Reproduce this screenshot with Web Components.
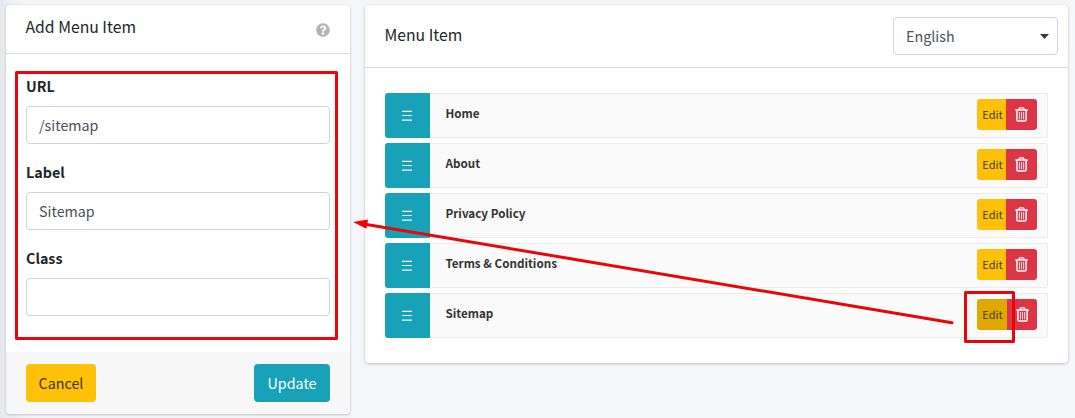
<!DOCTYPE html>
<html lang="en">
<head>
<meta charset="utf-8">
<title>Menu</title>
<style>
html,body{margin:0;height:418px;overflow:hidden}
body{background:#f4f6f9;font-family:"Noto Sans CJK SC","Noto Sans",sans-serif;font-size:14.3px;line-height:24px;color:#212529}
</style>
</head>
<body>
<menu-page></menu-page>
<script>
function define(name, html) {
  const t = document.createElement('template');
  t.innerHTML = html;
  customElements.define(name, class extends HTMLElement {
    constructor() {
      super();
      this.attachShadow({mode: 'open'}).append(t.content.cloneNode(true));
    }
  });
}

define('ui-card', `<style>
:host{display:block;box-sizing:border-box;background:#fff;border-radius:4px;box-shadow:0 0 1px rgba(0,0,0,.13),0 1px 3px rgba(0,0,0,.2);overflow:hidden}
</style><slot></slot>`);

define('card-header', `<style>
:host{display:flex;box-sizing:border-box;justify-content:space-between;border-bottom:1px solid #d9dcdf;font-size:15.75px}
</style><slot></slot>`);

define('help-icon', `<style>:host{display:block;width:14px;height:14px}svg{display:block}</style>
<svg width="14" height="14" viewBox="0 0 512 512"><path fill="#adb5bd" d="M504 256c0 137-111 248-248 248S8 393 8 256 119 8 256 8s248 111 248 248zM262.700 90c-54.500 0-89.300 23-116.500 63.800-3.500 5.300-2.400 12.400 2.700 16.300l34.700 26.300c5.200 3.900 12.600 3 16.700-2.100 17.900-22.700 30.100-35.800 57.300-35.800 20.400 0 45.700 13.100 45.700 33 0 15-12.400 22.700-32.500 34C247.100 238.500 216 254.900 216 296v4c0 6.600 5.400 12 12 12h56c6.600 0 12-5.400 12-12v-1.300c0-28.500 83.200-29.600 83.200-106.700 0-58-60.200-102-116.500-102zM256 338c-25.400 0-46 20.600-46 46s20.600 46 46 46 46-20.600 46-46-20.600-46-46-46z"/></svg>`);

define('form-field', `<style>
:host{display:block;margin-bottom:16px}
.label{display:block;font-weight:700;margin-bottom:8px}
.input{box-sizing:border-box;height:38px;border:1px solid #ced4da;border-radius:4px;padding:6px 12px;line-height:24px;color:#495057;background:#fff}
</style><span class="label"><slot name="label"></slot></span><div class="input"><slot></slot></div>`);

define('ui-button', `<style>
:host{display:block;box-sizing:border-box;height:38px;padding:7px 0;text-align:center;border-radius:4px;width:70px;background:#ffc107;color:#3b3522}
:host([kind=info]){width:76px;background:#17a2b8;color:#fff}
</style><slot></slot>`);

define('language-select', `<style>
:host{display:flex;box-sizing:border-box;width:165px;height:38px;border:1px solid #ced4da;border-radius:4px;padding:0 8px 0 12px;align-items:center;justify-content:space-between;color:#495057;font-size:14.3px}
svg{display:block}
</style><slot></slot><svg width="9" height="5" viewBox="0 0 9 5"><path d="M0 0h9L4.500 5z" fill="#343a40"/></svg>`);

define('menu-row', `<style>
:host{display:flex;box-sizing:border-box;height:45px;align-items:stretch;background:#fafafa;border-radius:3px;box-shadow:inset 0 0 0 1px #ebebeb;color:#333}
.handle{box-sizing:border-box;width:45px;padding-right:1px;background:#17a2b8;border-radius:3px 0 0 3px;display:flex;align-items:center;justify-content:center}
.name{flex:1;padding:8px 0 0 15.5px;font-size:11.650px;font-weight:700;line-height:24px}
.actions{display:flex;margin:6px 11px 8px 0;height:31px;border-radius:3px;overflow:hidden}
.edit{box-sizing:border-box;padding-left:2px;width:29px;background:#ffc107;color:#443b1d;font-size:11px;line-height:30px;text-align:center}
:host([active]) .edit{background:#e0a800;width:30px;padding-left:1px}
.remove{width:31px;background:#dc3545;display:flex;align-items:center;justify-content:center}
:host([active]) .remove{width:30px}
svg{display:block}
</style>
<div class="handle"><svg width="10" height="11" viewBox="0 0 10 11"><path d="M0 1.300h10M0 5.500h10M0 10.200h10" stroke="#f0fafb" stroke-width="1.200"/></svg></div>
<div class="name"><slot></slot></div>
<div class="actions"><div class="edit">Edit</div><div class="remove"><svg width="13" height="15" viewBox="0 0 13 15" fill="none" stroke="#fff"><path d="M.2 3h12.600" stroke-width="1.500"/><path d="M4 2.800V1.800Q4 .9 5 .9h3q1 0 1 .9v1" stroke-width="1.300"/><path d="M1.900 3v9.700q0 1.400 1.400 1.400h6.400q1.400 0 1.400-1.400V3" stroke-width="1.500"/><path d="M4.400 5v7.300M6.500 5v7.300M8.600 5v7.300" stroke-width="1" stroke="#fbdde1"/></svg></div></div>`);

define('callout-marks', `<style>:host{position:absolute;left:0;top:0;width:1075px;height:418px;pointer-events:none}svg{display:block}</style>
<svg width="1075" height="418" viewBox="0 0 1075 418" fill="none" stroke="#e8060a" stroke-width="3" stroke-linejoin="round">
<rect x="16.500" y="72.500" width="320" height="266"/><rect x="965.500" y="292.500" width="48" height="49"/>
<path d="M952 322.700L365 224.200" stroke-linecap="round"/><path d="M353 222l15-2.600-1.500 9.300z" fill="#f80000" stroke="none"/></svg>`);

define('menu-page', `<style>
:host{display:flex;box-sizing:border-box;height:418px;padding:5px 7px 4px 6px;gap:15px;align-items:flex-start;position:relative;background:linear-gradient(90deg,#e5e7ec 0,#eceef3 7px,#f4f6f9 28px)}
.editor{width:344px;height:409px}
.editor card-header{height:49px;padding:10px 20px 0 19.5px}
help-icon{margin-top:8px}
.fields{padding:20px 20px 20px}
.foot{display:flex;justify-content:space-between;padding:12px 20px 12px;background:#f7f7f7}
.list{flex:1;height:358px}
.list card-header{height:63px;padding:12px 10px 0 19.5px}
.list .title{padding-top:6px}
.rows{display:grid;gap:5px;padding:25px 20px}
</style>
<ui-card class="editor">
<card-header><span class="title">Add Menu Item</span><help-icon></help-icon></card-header>
<div class="fields">
<form-field><span slot="label">URL</span>/sitemap</form-field>
<form-field><span slot="label">Label</span>Sitemap</form-field>
<form-field><span slot="label">Class</span></form-field>
</div>
<div class="foot"><ui-button>Cancel</ui-button><ui-button kind="info">Update</ui-button></div>
</ui-card>
<ui-card class="list">
<card-header><span class="title">Menu Item</span><language-select>English</language-select></card-header>
<div class="rows"><menu-row>Home</menu-row><menu-row>About</menu-row><menu-row>Privacy Policy</menu-row><menu-row>Terms &amp; Conditions</menu-row><menu-row active>Sitemap</menu-row></div>
</ui-card>
<callout-marks></callout-marks>`);
</script>
</body>
</html>
